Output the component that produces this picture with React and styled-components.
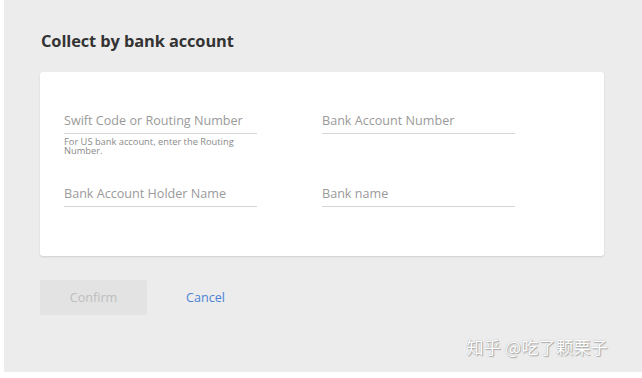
import React from 'react';
import styled, { createGlobalStyle } from 'styled-components';

const Global = createGlobalStyle`
  html, body { margin: 0; padding: 0; background: #fff; }
  body { font-family: "Open Sans", Lato, sans-serif; }
`;

const Page = styled.div`
  width: 638px;
  height: 372px;
  margin-left: 4px;
  background: #ececec;
  position: relative;
  box-sizing: border-box;
  padding: 30px 38px 0 32px;
`;

const Title = styled.h2`
  margin: 0 0 20px 5px;
  font-size: 16.4px;
  font-weight: 700;
  color: #333;
  line-height: 22px;
  letter-spacing: -0.1px;
`;

const Card = styled.div`
  width: 564px;
  height: 184px;
  margin-left: 4px;
  background: #fff;
  border-radius: 3px;
  box-shadow: 0 1px 2px rgba(0, 0, 0, 0.12);
  box-sizing: border-box;
  padding: 38px 0 0 24px;
  display: grid;
  grid-template-columns: 193px 193px;
  column-gap: 65px;
  grid-template-rows: 73px auto;
  align-content: start;
`;

const Field = styled.div`
  display: flex;
  flex-direction: column;
`;

const Input = styled.div`
  height: 23px;
  border-bottom: 1px solid #d6d6d6;
  font-size: 12.6px;
  color: #9a9a9a;
  line-height: 22px;
`;

const Hint = styled.div`
  margin-top: 3px;
  font-size: 9.3px;
  line-height: 9px;
  color: #8a8a8a;
  width: 186px;
`;

const Actions = styled.div`
  display: flex;
  align-items: center;
  gap: 39px;
  margin: 24px 0 0 4px;
`;

const Confirm = styled.button`
  width: 107px;
  height: 35px;
  border: none;
  border-radius: 2px;
  background: #e3e3e3;
  color: #bdbdbd;
  font-family: inherit;
  font-size: 12.6px;
`;

const Cancel = styled.span`
  color: #4d83d6;
  font-size: 12.6px;
`;

const Watermark = styled.div`
  position: absolute;
  right: 34px;
  bottom: 13px;
  font-family: "Noto Sans CJK SC", sans-serif;
  font-size: 17px;
  color: #fff;
  text-shadow: 0 0 1px #999, 1px 1px 1px #aaa;
  letter-spacing: 0.3px;
`;

export default function App() {
  return (
    <>
      <Global />
      <Page>
        <Title>Collect by bank account</Title>
        <Card>
          <Field>
            <Input>Swift Code or Routing Number</Input>
            <Hint>For US bank account, enter the Routing Number.</Hint>
          </Field>
          <Field>
            <Input>Bank Account Number</Input>
          </Field>
          <Field>
            <Input>Bank Account Holder Name</Input>
          </Field>
          <Field>
            <Input>Bank name</Input>
          </Field>
        </Card>
        <Actions>
          <Confirm>Confirm</Confirm>
          <Cancel>Cancel</Cancel>
        </Actions>
        <Watermark>知乎 @吃了颗栗子</Watermark>
      </Page>
    </>
  );
}
